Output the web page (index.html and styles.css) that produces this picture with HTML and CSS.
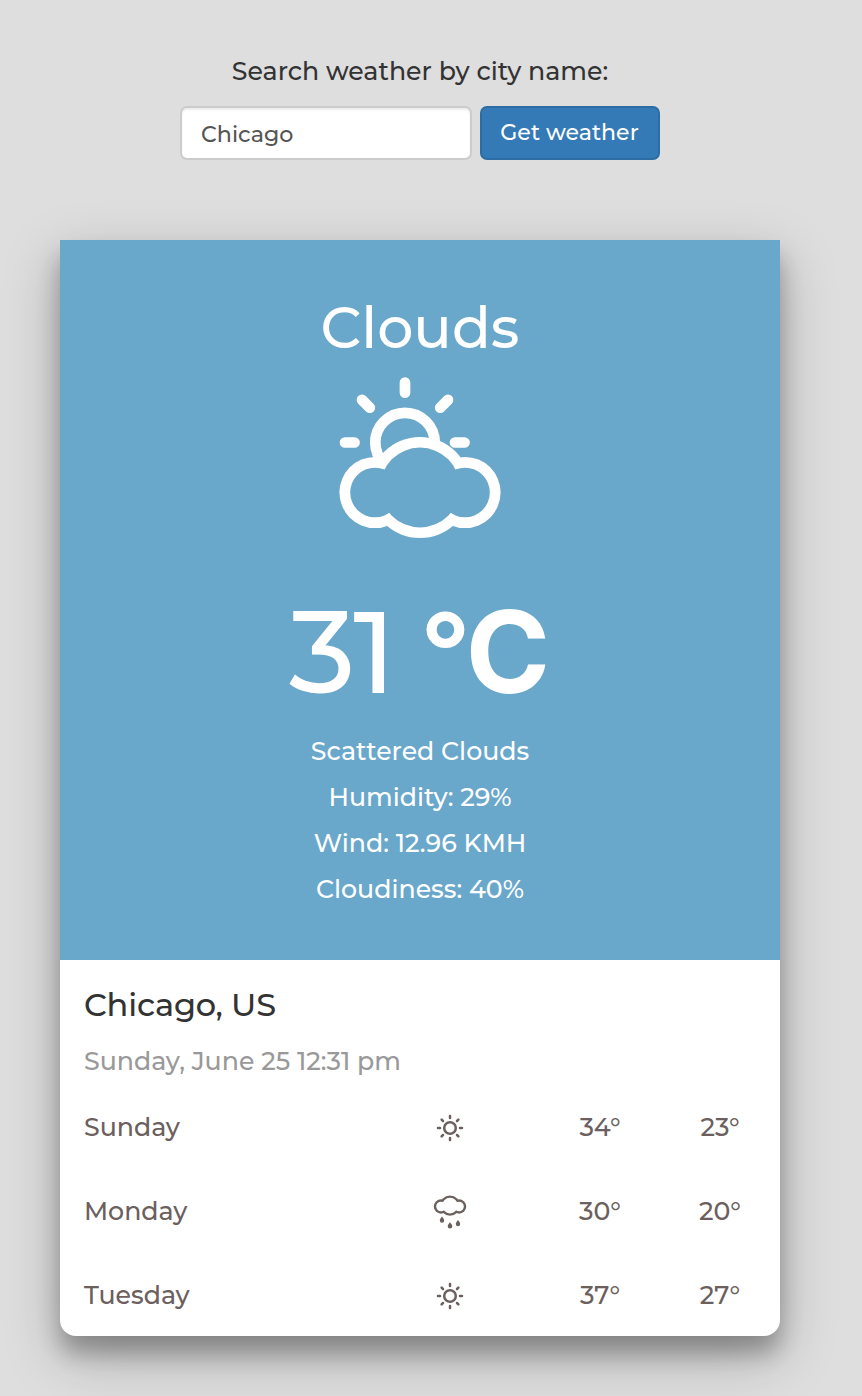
FILE: index.html
```
<!DOCTYPE html>
<html lang="en">
<head>
<meta charset="utf-8">
<title>Weather</title>
<link rel="stylesheet" href="styles.css">
</head>
<body>
<main class="page">
  <form class="search">
    <label class="search-label" for="city">Search weather by city name:</label>
    <div class="search-row">
      <input class="search-input" id="city" type="text" value="Chicago">
      <button class="search-button" type="button">Get weather</button>
    </div>
  </form>
  <section class="card">
    <div class="current">
      <h1 class="condition">Clouds</h1>
      <svg class="current-icon" viewBox="0 0 162 162">
        <g fill="none" stroke="#fff" stroke-width="10.7" stroke-linecap="round">
          <circle cx="66" cy="65.5" r="29.7"/>
          <path d="M66 5.5v10.2M6 65.5h9.5M116 65.5h9.5M23 22.9l7.8 7.8M109 22.9l-7.8 7.8"/>
        </g>
        <g fill="#fff"><circle cx="36" cy="115.5" r="35.6"/><circle cx="126" cy="115.5" r="35.6"/><circle cx="81" cy="110.5" r="50.6"/></g>
        <g fill="#69a7cb"><circle cx="36" cy="115.5" r="24.8"/><circle cx="126" cy="115.5" r="24.8"/><circle cx="81" cy="110.5" r="39.9"/></g>
      </svg>
      <div class="temperature"><span class="degrees">31</span><span class="ring">°</span><span class="unit">C</span></div>
      <div class="details">
        <div>Scattered Clouds</div>
        <div>Humidity: 29%</div>
        <div>Wind: 12.96 KMH</div>
        <div>Cloudiness: 40%</div>
      </div>
    </div>
    <div class="forecast">
      <h2 class="city">Chicago, US</h2>
      <div class="date">Sunday, June 25 12:31 pm</div>
      <div class="day">
        <span class="name">Sunday</span>
        <svg class="day-icon" viewBox="-18 -18 36 36"><g fill="none" stroke="#6b605d" stroke-width="2.5" stroke-linecap="round"><circle r="5.8"/><path d="M0-12v2M0 12v-2M-12 0h2M12 0h-2M-8.4-8.4l1.4 1.4M8.4-8.4l-1.4 1.4M-8.4 8.4l1.4-1.4M8.4 8.4l-1.4-1.4"/></g></svg>
        <span class="high">34°</span><span class="low">23°</span>
      </div>
      <div class="day">
        <span class="name">Monday</span>
        <svg class="day-icon" viewBox="-18 -18 36 36">
          <g fill="#6b605d"><circle cx="-9" cy="-5.5" r="7.2"/><circle cx="9" cy="-5.5" r="7.2"/><circle cy="-6.4" r="10.1"/>
          <path d="M-8 4.6c1 1.6 2.2 2.7 2.2 4a2.2 2.2 0 0 1-4.4 0c0-1.3 1.2-2.4 2.2-4zM0 10.3c1 1.6 2.3 2.7 2.3 4a2.3 2.3 0 0 1-4.6 0c0-1.3 1.3-2.4 2.3-4zM8 8c1 1.6 2.2 2.7 2.2 4a2.2 2.2 0 0 1-4.4 0c0-1.3 1.2-2.4 2.2-4z"/></g>
          <g fill="#fff"><circle cx="-9" cy="-5.5" r="4.8"/><circle cx="9" cy="-5.5" r="4.8"/><circle cy="-6.4" r="7.8"/></g>
        </svg>
        <span class="high">30°</span><span class="low">20°</span>
      </div>
      <div class="day">
        <span class="name">Tuesday</span>
        <svg class="day-icon" viewBox="-18 -18 36 36"><g fill="none" stroke="#6b605d" stroke-width="2.5" stroke-linecap="round"><circle r="5.8"/><path d="M0-12v2M0 12v-2M-12 0h2M12 0h-2M-8.4-8.4l1.4 1.4M8.4-8.4l-1.4 1.4M-8.4 8.4l1.4-1.4M8.4 8.4l-1.4-1.4"/></g></svg>
        <span class="high">37°</span><span class="low">27°</span>
      </div>
    </div>
  </section>
</main>
</body>
</html>
```
FILE: styles.css
```
* { box-sizing: border-box; }
html, body { height: 100%; overflow: hidden; }
body {
  margin: 0;
  background: #dedede;
  color: #333;
  font-family: Montserrat, Inter, sans-serif;
  font-size: 25.25px;
  font-weight: 500;
}
.page { width: 720px; margin-left: 60px; padding-top: 52px; }
.search { display: flex; flex-direction: column; align-items: center; height: 188px; }
.search-label { line-height: 38px; }
.search-row { display: flex; gap: 8px; margin-top: 16px; }
.search-input {
  width: 292px; height: 54px; padding: 2px 19px 0;
  border: 2px solid #ccc; border-radius: 7px;
  background: #fff; box-shadow: inset 0 2px 2px rgba(0,0,0,.075);
  color: #555; font: 500 22.2px Montserrat, Inter, sans-serif;
}
.search-button {
  width: 180px; height: 54px; padding: 0 1px 2px 0;
  border: 2px solid #2e6da4; border-radius: 7px; background: #337ab7;
  color: #fff; font: 500 22.1px Montserrat, Inter, sans-serif; white-space: nowrap;
}
.card {
  height: 1096px; border-radius: 0 0 16px 16px; background: #fff;
  box-shadow: 0 20px 56px rgba(0,0,0,.25), 0 17px 22px rgba(0,0,0,.25);
}
.current {
  display: flex; flex-direction: column; align-items: center;
  height: 720px; padding-top: 48px; background: #69a7cb; color: #fff;
}
.condition { margin: 0; font-size: 57px; font-weight: 500; line-height: 80px; }
.current-icon { width: 162px; height: 162px; margin-top: 9px; }
.temperature {
  display: flex; width: 260px; height: 120px; margin-top: 53px; line-height: 120px;
}
.degrees { width: 136px; margin-left: -1px; font-size: 116px; font-weight: 500; letter-spacing: -2px; }
.ring { width: 48px; padding-left: 6px; font-size: 104px; font-weight: 800; line-height: 111px; }
.unit { font-family: Inter, sans-serif; font-size: 114px; font-weight: 700; }
.details { margin-top: 16px; line-height: 46px; text-align: center; }
.forecast { padding: 24px 24px 0; color: #6b605d; }
.city { margin: 0; color: #333; font-size: 32px; font-weight: 500; line-height: 42px; letter-spacing: -0.2px; }
.date { margin-top: 14px; color: #999; line-height: 42px; }
.day {
  display: grid; grid-template-columns: 306px 120px 180px 60px;
  align-items: center; height: 84px;
}
.date + .day { margin-top: 4px; }
.day-icon { width: 36px; height: 36px; justify-self: center; }
.name, .high, .low { padding-bottom: 2px; }
.high, .low { text-align: center; }
```
